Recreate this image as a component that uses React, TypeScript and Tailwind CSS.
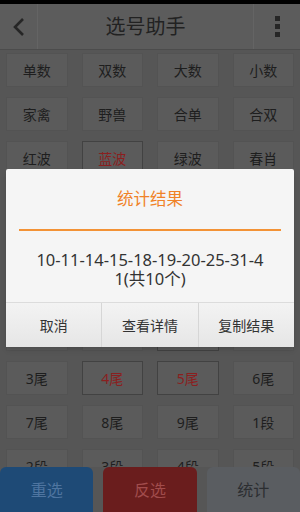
const rows: string[][] = [
  ["单数", "双数", "大数", "小数"],
  ["家禽", "野兽", "合单", "合双"],
  ["红波", "蓝波", "绿波", "春肖"],
  ["夏肖", "秋肖", "冬肖", "琴肖"],
  ["天肖", "地肖", "前肖", "后肖"],
  ["0头", "1头", "2头", "3头"],
  ["4头", "0尾", "1尾", "2尾"],
  ["3尾", "4尾", "5尾", "6尾"],
  ["7尾", "8尾", "9尾", "1段"],
  ["2段", "3段", "4段", "5段"],
];

const picked = new Set(["蓝波", "1尾", "4尾", "5尾"]);

export default function App() {
  return (
    <div
      className="relative flex h-[512px] w-[300px] flex-col overflow-hidden bg-[#565656]"
      style={{ fontFamily: '"Noto Sans", "Noto Sans CJK SC", sans-serif' }}
    >
      <div className="h-[4px] bg-black" />

      {/* header */}
      <div className="flex h-[46px] items-stretch border-b border-[#4c4c4c] bg-[#5c5c5c]">
        <div className="flex w-[38px] items-center justify-center border-r border-[#646464]">
          <svg width="14" height="20" viewBox="0 0 14 20">
            <path d="M11 2 L3 10 L11 18" fill="none" stroke="#262626" strokeWidth="2.6" />
          </svg>
        </div>
        <div className="flex flex-1 items-center justify-center text-[20px] text-[#222]">
          选号助手
        </div>
        <div className="flex w-[47px] flex-col items-center justify-center gap-[3px] border-l border-[#646464] pl-[1px]">
          <span className="h-[5px] w-[5px] bg-[#262626]" />
          <span className="h-[5px] w-[5px] bg-[#262626]" />
          <span className="h-[5px] w-[5px] bg-[#262626]" />
        </div>
      </div>

      {/* number grid */}
      <div className="flex-1 overflow-hidden">
        <div className="grid grid-cols-4 gap-x-[14px] gap-y-[10px] px-[6px] pt-[3px]">
          {rows.flat().map((label) => {
            const on = picked.has(label);
            return (
              <div
                key={label}
                className={
                  on
                    ? "flex h-[34px] items-center justify-center border border-[#424242] bg-[#5b5b5b] text-[14px] text-[#8a1f1f]"
                    : "flex h-[34px] items-center justify-center border border-[#535353] bg-[#5b5b5b] text-[14px] text-[#1e1e1e]"
                }
              >
                {label}
              </div>
            );
          })}
        </div>
      </div>

      {/* bottom actions */}
      <div className="flex h-[45px] gap-[10px]">
        <button className="flex-1 rounded-t-[6px] bg-[#1e4a76] text-[16px] text-[#4f75a0]">重选</button>
        <button className="flex-1 rounded-t-[6px] bg-[#6a1d1d] text-[16px] text-[#a14c4c]">反选</button>
        <button className="flex-1 rounded-t-[6px] bg-[#5a5d61] text-[16px] text-[#2c2e31]">统计</button>
      </div>

      {/* result dialog */}
      <div className="absolute left-[6px] top-[169px] w-[288px] rounded-[2px] bg-[#f5f5f5] shadow-md">
        <div className="flex h-[60px] items-center justify-center text-[16.5px] text-[#f08228]">统计结果</div>
        <div className="mx-[13px] h-[2px] bg-[#f39236]" />
        <p className="mx-auto w-[230px] break-all pb-[14px] pt-[19px] text-center text-[16.5px] leading-[19px] text-[#333]">
          10-11-14-15-18-19-20-25-31-41(共10个)
        </p>
        <div className="flex h-[45px] border-t border-[#dcdcdc] bg-gradient-to-b from-[#f3f3f3] to-[#e6e6e6] text-[14px] text-[#333]">
          <button className="flex-1 border-r border-[#d6d6d6]">取消</button>
          <button className="flex-1 border-r border-[#d6d6d6]">查看详情</button>
          <button className="flex-1">复制结果</button>
        </div>
      </div>
    </div>
  );
}
